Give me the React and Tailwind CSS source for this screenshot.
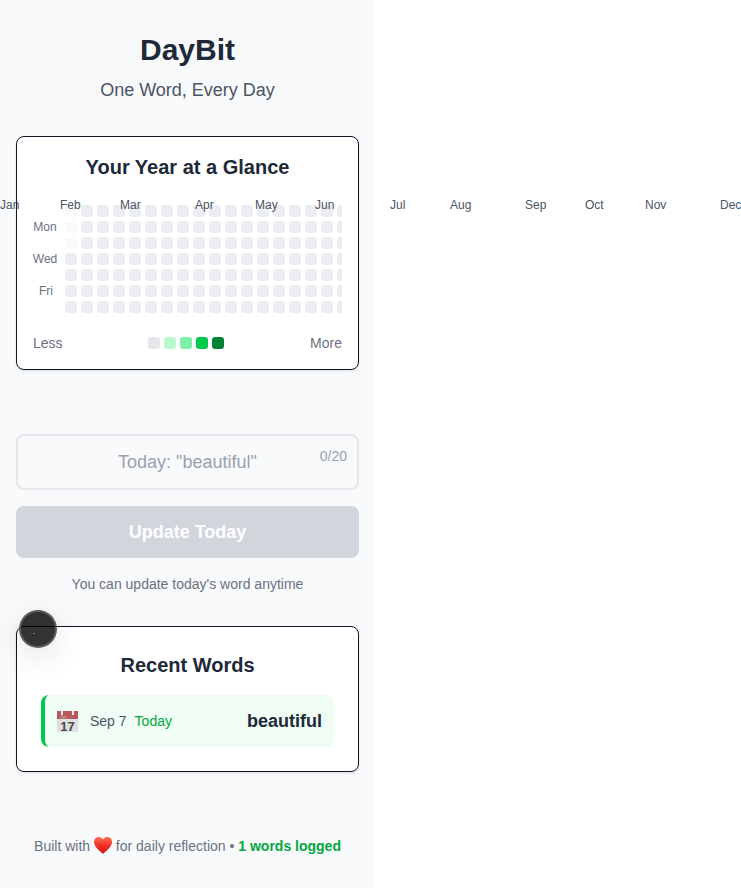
const months = [
  ["Jan", "w-[60px]"],
  ["Feb", "w-[60px]"],
  ["Mar", "w-[75px]"],
  ["Apr", "w-[60px]"],
  ["May", "w-[60px]"],
  ["Jun", "w-[75px]"],
  ["Jul", "w-[60px]"],
  ["Aug", "w-[75px]"],
  ["Sep", "w-[60px]"],
  ["Oct", "w-[60px]"],
  ["Nov", "w-[75px]"],
  ["Dec", "w-[60px]"],
];
const legend = ["bg-gray-200", "bg-green-200", "bg-green-300", "bg-green-500", "bg-green-700"];

function Heatmap() {
  const cols = Array.from({ length: 20 }, (_, c) => c);
  const rows = Array.from({ length: 7 }, (_, r) => r);
  return (
    <div className="relative mt-6 flex gap-2">
      <div className="flex w-6 shrink-0 flex-col gap-1 text-center text-xs leading-3 text-gray-500">
        {["", "Mon", "", "Wed", "", "Fri", ""].map((d, i) => (
          <div key={i} className={d === "Fri" ? "flex h-3 justify-center whitespace-nowrap pl-0.5" : "flex h-3 justify-center whitespace-nowrap"}>{d}</div>
        ))}
      </div>
      <div className="flex flex-1 gap-1 overflow-hidden">
        {cols.map((c) => (
          <div key={c} className="flex shrink-0 flex-col gap-1">
            {rows.map((r) => (
              <div
                key={r}
                className={c === 0 && r < 3 ? "h-3 w-3 rounded-[3px] bg-gray-50" : "h-3 w-3 rounded-[3px] bg-[#ebedf0]"}
              />
            ))}
          </div>
        ))}
      </div>
      <div className="absolute -left-[33px] -top-2 flex text-xs leading-4 text-gray-600">
        {months.map(([m, w]) => (
          <div key={m} className={w + " shrink-0"}>{m}</div>
        ))}
      </div>
    </div>
  );
}

function CalendarIcon() {
  return (
    <svg viewBox="0 0 21 21" className="mr-3 h-[21px] w-[21px] shrink-0 overflow-visible">
      <rect x="0" y="8" width="21" height="13" fill="#dfdfdf" />
      <rect x="0" y="0" width="21" height="8" fill="#b55b5e" />
      <rect x="4" y="0" width="2" height="4" fill="#f4e6e6" />
      <rect x="15" y="0" width="2" height="4" fill="#f4e6e6" />
      <path d="M3 8 L5 4.5 L7 8 M6 8 L8 5 L10 8" fill="none" stroke="#d9a5a6" strokeWidth="0.8" />
      <text x="10.5" y="19.5" textAnchor="middle" fontSize="13" fontWeight="700" fill="#4a4a4a" fontFamily="Liberation Sans, Arial, sans-serif">17</text>
    </svg>
  );
}

function HeartIcon() {
  return (
    <svg viewBox="0 0 18 17" className="inline-block h-[17px] w-[18px] align-[-3px]">
      <defs>
        <linearGradient id="heartFill" x1="0" y1="0" x2="0" y2="1">
          <stop offset="0" stopColor="#ff6a55" />
          <stop offset="0.5" stopColor="#f2302a" />
          <stop offset="1" stopColor="#d5140f" />
        </linearGradient>
      </defs>
      <path d="M9 17 C6 14 0 10 0 5 C0 2 2.2 0 4.8 0 C6.6 0 8.2 1 9 2.6 C9.8 1 11.4 0 13.2 0 C15.8 0 18 2 18 5 C18 10 12 14 9 17 Z" fill="url(#heartFill)" />
    </svg>
  );
}

export default function App() {
  return (
    <div className="h-[888px] w-[741px] overflow-hidden bg-white font-['Liberation_Sans',Arial,sans-serif]">
      <div className="relative h-full w-[375px] bg-gray-50 px-4 pt-8">
        <h1 className="text-center text-3xl font-bold text-gray-800">DayBit</h1>
        <p className="mt-2 text-center text-lg text-gray-600">One Word, Every Day</p>

        <section className="mt-8 rounded-lg border border-gray-900 bg-white p-4 shadow-sm">
          <h2 className="text-center text-xl font-bold text-gray-800">Your Year at a Glance</h2>
          <Heatmap />
          <div className="mt-5 flex items-center justify-between text-sm text-gray-500">
            <span>Less</span>
            <div className="flex gap-1">
              {legend.map((c) => (
                <div key={c} className={"h-3 w-3 rounded-[3px] " + c} />
              ))}
            </div>
            <span>More</span>
          </div>
        </section>

        <div className="relative mt-16">
          <div className="flex h-14 items-center justify-center rounded-lg border-2 border-gray-200 bg-gray-50 text-lg text-gray-400">
            Today: "beautiful"
          </div>
          <span className="absolute right-3 top-3 text-sm text-gray-400">0/20</span>
        </div>
        <button className="mt-4 flex h-[52px] w-full items-center justify-center rounded-lg bg-gray-300 text-lg font-bold text-white">
          Update Today
        </button>
        <p className="mt-4 text-center text-sm text-gray-500">You can update today's word anytime</p>

        <section className="mt-8 rounded-lg border border-gray-900 bg-white p-6 shadow-sm">
          <h2 className="text-center text-xl font-bold text-gray-800">Recent Words</h2>
          <div className="mt-4 flex items-center justify-between rounded-lg border-l-4 border-green-500 bg-green-50 px-3 py-3">
            <div className="flex items-center">
              <CalendarIcon />
              <span className="text-sm text-gray-600">Sep 7</span>
              <span className="ml-2 text-sm text-green-600">Today</span>
            </div>
            <span className="text-lg font-bold text-gray-800">beautiful</span>
          </div>
        </section>

        <p className="mt-16 text-center text-sm text-gray-500">
          Built with <HeartIcon /> for daily reflection • <span className="font-bold text-green-600">1 words logged</span>
        </p>

        <div className="absolute left-[19px] top-[610px] flex h-[38px] w-[38px] items-center justify-center rounded-full border-2 border-white/20 bg-black/80 shadow-[0_8px_32px_rgba(0,0,0,0.12)]">
          <div className="mr-2 mt-2 h-px w-0.5 bg-gray-500" />
        </div>
      </div>
    </div>
  );
}
